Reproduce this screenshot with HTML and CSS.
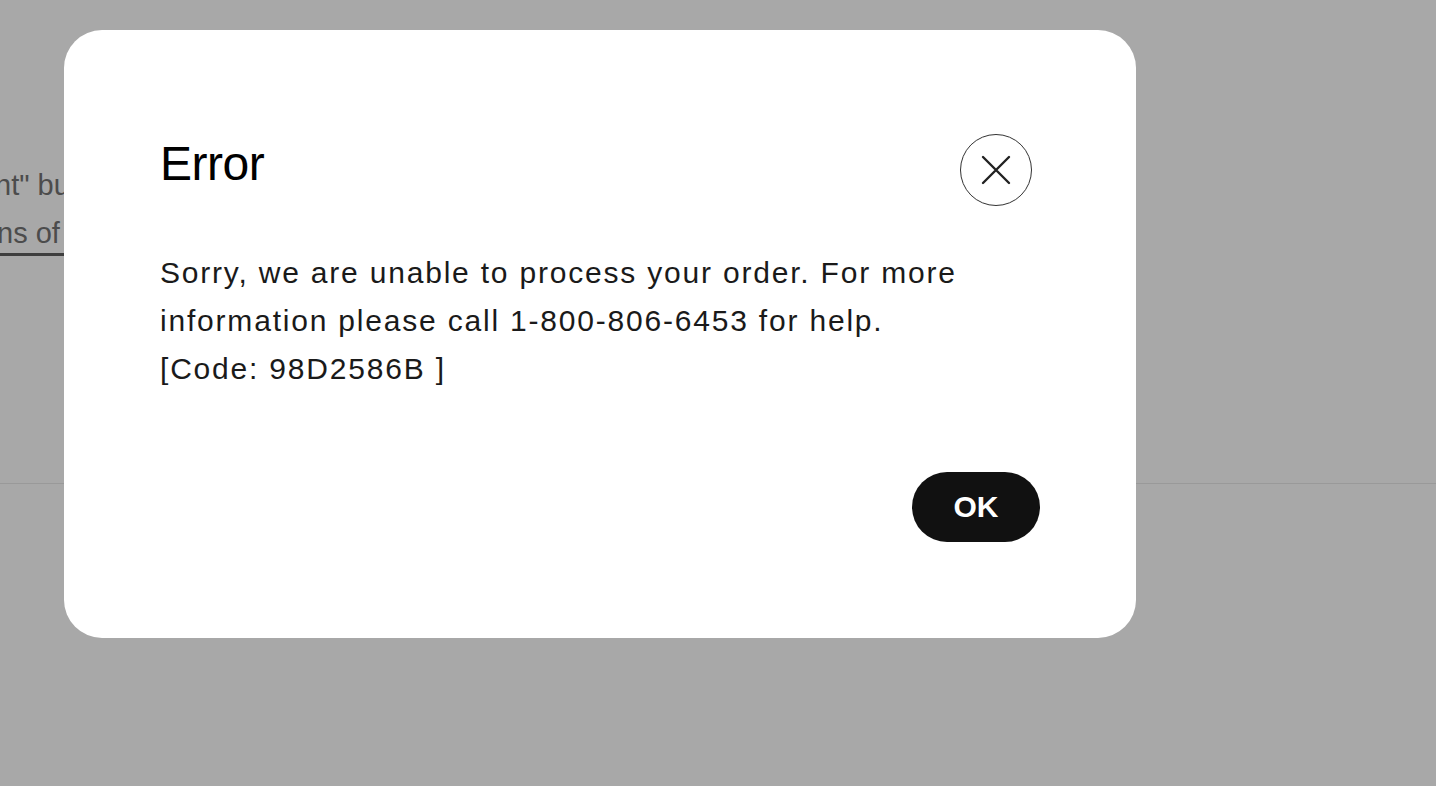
FILE: index.html
```html
<!DOCTYPE html>
<html lang="en">
<head>
<meta charset="utf-8">
<title>Error</title>
<link rel="stylesheet" href="styles.css">
</head>
<body>
<div class="page">
  <div class="page-content">
    <p class="bg-line bg-line-1">nt" button, you agree to our</p>
    <p class="bg-line bg-line-2"><a class="bg-link" href="#">ns of Sale</a></p>
    <hr class="bg-rule">
  </div>
</div>
<div class="overlay">
  <div class="modal" role="dialog" aria-labelledby="modal-title">
    <div class="modal-header">
      <h2 class="modal-title" id="modal-title">Error</h2>
      <button class="close-btn" aria-label="Close">
        <span class="close-circle">
          <svg width="30" height="30" viewBox="0 0 30 30" aria-hidden="true">
            <path d="M2 2 L28 28 M28 2 L2 28" stroke="#222" stroke-width="2.4" stroke-linecap="round" fill="none"/>
          </svg>
        </span>
      </button>
    </div>
    <p class="modal-body">Sorry, we are unable to process your order. For more information please call 1-800-806-6453 for help. [Code: 98D2586B ]</p>
    <div class="modal-footer">
      <button class="ok-btn">OK</button>
    </div>
  </div>
</div>
</body>
</html>
```

FILE: styles.css
```css
* {
  box-sizing: border-box;
}

html, body {
  margin: 0;
  padding: 0;
  height: 100%;
}

body {
  background: #a8a8a8;
  font-family: "Liberation Sans", Arial, sans-serif;
  overflow: hidden;
  position: relative;
}

.page {
  width: 100%;
  height: 100%;
}

.page-content {
  padding-top: 165px;
}

.bg-line {
  margin: 0;
  font-size: 29px;
  line-height: 40px;
  color: #4c4c4c;
  white-space: nowrap;
}

.bg-line-1 {
  margin-left: -5px;
}

.bg-line-2 {
  margin-left: -3px;
  margin-top: 8px;
}

.bg-link {
  color: #4c4c4c;
  text-decoration: none;
  border-bottom: 3px solid #3e3e3e;
  padding-bottom: 4px;
}

.bg-rule {
  border: 0;
  border-top: 1px solid #999999;
  margin: 230px 0 0 0;
}

.overlay {
  position: absolute;
  inset: 0;
}

.modal {
  position: absolute;
  left: 64px;
  top: 30px;
  width: 1072px;
  height: 608px;
  background: #ffffff;
  border-radius: 38px;
  padding: 96px;
  display: flex;
  flex-direction: column;
}

.modal-header {
  display: flex;
  justify-content: space-between;
  align-items: flex-start;
}

.modal-title {
  margin: 0;
  padding-top: 10px;
  font-size: 48px;
  line-height: 56px;
  font-weight: 400;
  letter-spacing: -0.5px;
  color: #000000;
}

.close-btn {
  width: 88px;
  height: 88px;
  padding: 0;
  border: 0;
  background: transparent;
  display: flex;
  align-items: center;
  justify-content: center;
  cursor: pointer;
}

.close-circle {
  width: 72px;
  height: 72px;
  border: 1.5px solid #333333;
  border-radius: 50%;
  display: flex;
  align-items: center;
  justify-content: center;
}

.modal-body {
  margin: 35px 0 0 0;
  max-width: 815px;
  font-size: 30px;
  line-height: 48px;
  letter-spacing: 1.8px;
  color: #1a1a1a;
}

.modal-footer {
  margin-top: auto;
  display: flex;
  justify-content: flex-end;
}

.ok-btn {
  width: 128px;
  height: 70px;
  border: 0;
  border-radius: 35px;
  background: #111111;
  color: #ffffff;
  font-family: "Liberation Sans", Arial, sans-serif;
  font-size: 30px;
  font-weight: 700;
  cursor: pointer;
}
```
